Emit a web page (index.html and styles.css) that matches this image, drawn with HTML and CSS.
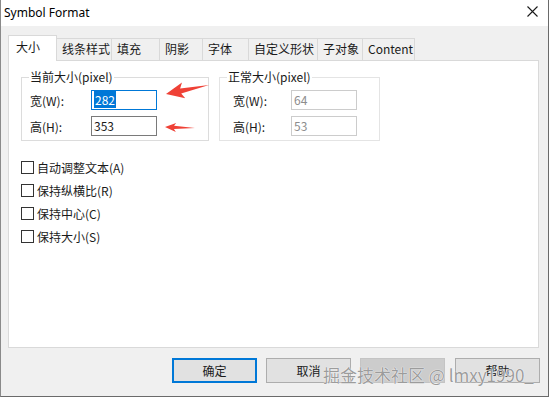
FILE: index.html
```html
<!DOCTYPE html>
<html lang="zh-CN">
<head>
    <meta charset="UTF-8">
    <title>Symbol Format</title>
    <link rel="stylesheet" href="styles.css">
</head>
<body>
    <div class="window">
        <div class="titlebar">
            <span class="title">Symbol Format</span>
            <svg class="close" width="11" height="11" viewBox="0 0 11 11">
                <path d="M0.5 0.5 L10.5 10.5 M10.5 0.5 L0.5 10.5" stroke="#1a1a1a" stroke-width="1.1" fill="none"/>
            </svg>
        </div>
        <div class="content">
            <div class="tabs">
                <div class="tab active" style="width:49px">大小</div>
                <div class="tab" style="width:55px">线条样式</div>
                <div class="tab" style="width:48px">填充</div>
                <div class="tab" style="width:43px">阴影</div>
                <div class="tab" style="width:46px">字体</div>
                <div class="tab" style="width:69px">自定义形状</div>
                <div class="tab" style="width:45px">子对象</div>
                <div class="tab" style="width:52px">Content</div>
            </div>
            <div class="panel">
                <div class="groups">
                    <fieldset class="group current">
                        <legend>当前大小(pixel)</legend>
                        <div class="field">
                            <label>宽(W):</label>
                            <span class="input focused"><span class="selected">282</span></span>
                        </div>
                        <div class="field">
                            <label>高(H):</label>
                            <span class="input">353</span>
                        </div>
                    </fieldset>
                    <fieldset class="group normal">
                        <legend>正常大小(pixel)</legend>
                        <div class="field">
                            <label>宽(W):</label>
                            <span class="input disabled">64</span>
                        </div>
                        <div class="field">
                            <label>高(H):</label>
                            <span class="input disabled">53</span>
                        </div>
                    </fieldset>
                </div>
                <div class="checks">
                    <div class="check"><span class="box"></span>自动调整文本(A)</div>
                    <div class="check"><span class="box"></span>保持纵横比(R)</div>
                    <div class="check"><span class="box"></span>保持中心(C)</div>
                    <div class="check"><span class="box"></span>保持大小(S)</div>
                </div>
            </div>
            <div class="buttons">
                <button class="btn default">确定</button>
                <button class="btn">取消</button>
                <button class="btn blank"></button>
                <button class="btn last">帮助</button>
            </div>
        </div>

        <!-- annotation arrows drawn over the dialog -->
        <svg class="arrows" width="549" height="397" viewBox="0 0 549 397">
            <g transform="translate(166 94) rotate(-11.8)" fill="#ef4136">
                <polygon points="0,0 18,-8 15,-2.6 44,0 15,2.6 18,8"/>
            </g>
            <g transform="translate(165 127) rotate(2)" fill="#ef4136">
                <polygon points="0,0 11,-4.5 9,-1.6 30,0 9,1.6 11,4.5"/>
            </g>
        </svg>
        <div class="watermark">掘金技术社区 @ lmxy1990_</div>
    </div>
</body>
</html>
```

FILE: styles.css
```css
body {
    margin: 0;
    padding: 0;
    font-family: 'Noto Sans CJK SC', 'Noto Sans', sans-serif;
    font-size: 12px;
    color: #1a1a1a;
    background-color: #ffffff;
}

.window {
    position: relative;
    box-sizing: border-box;
    width: 549px;
    height: 397px;
    border-left: 1px solid #8a8a8a;
    border-right: 1px solid #6a6a6a;
    border-bottom: 1px solid #6a6a6a;
    background-color: #f0f0f0;
    display: flex;
    flex-direction: column;
    overflow: hidden;
}

/* Title bar */
.titlebar {
    height: 26px;
    background-color: #ffffff;
    display: flex;
    align-items: center;
    justify-content: space-between;
    padding: 0 10px 0 3px;
    flex-shrink: 0;
}

.title {
    font-family: 'Noto Sans', sans-serif;
    font-size: 12px;
    color: #000;
    margin-top: -1px;
}

.close {
    margin-top: -3px;
}

.content {
    flex: 1;
    display: flex;
    flex-direction: column;
}

/* Tabs */
.tabs {
    display: flex;
    align-items: flex-end;
    height: 25px;
    margin-top: 9px;
    padding-left: 7px;
}

.tab {
    box-sizing: border-box;
    height: 22px;
    line-height: 20px;
    padding-left: 5px;
    border: 1px solid #d9d9d9;
    border-bottom: none;
    border-left: none;
    background-color: #f0f0f0;
    white-space: nowrap;
}

.tab.active {
    height: 26px;
    line-height: 21px;
    padding-left: 7px;
    background-color: #ffffff;
    border-left: 1px solid #d9d9d9;
    position: relative;
    z-index: 1;
    margin-bottom: -1px;
}

.panel {
    box-sizing: border-box;
    height: 288px;
    margin: 0 9px 0 7px;
    background-color: #ffffff;
    border: 1px solid #d9d9d9;
    padding: 8px 0 0 12px;
}

/* Group boxes */
.groups {
    display: flex;
    gap: 10px;
}

.group {
    box-sizing: border-box;
    margin: 0;
    padding: 0 0 4px 7px;
    border: 1px solid #dcdcdc;
    min-width: 0;
}

.group.current {
    width: 188px;
}

.group.normal {
    width: 161px;
    border-color: #e4e4e4;
}

.group legend {
    padding: 0 1px;
    line-height: 16px;
    color: #1a1a1a;
}

.field {
    display: flex;
    align-items: center;
    height: 20px;
    margin-top: 5px;
}

.field + .field {
    margin-top: 6px;
}

.field label {
    width: 61px;
    padding-left: 1px;
}

.normal .field label {
    width: 58px;
    padding-left: 6px;
}

.input {
    box-sizing: border-box;
    width: 66px;
    height: 20px;
    border: 1px solid #7a7a7a;
    padding: 0 2px;
    line-height: 18px;
    color: #1a1a1a;
    background-color: #fff;
}

.input.focused {
    border-color: #0078d7;
}

.input.disabled {
    border-color: #cccccc;
    color: #8d8d8d;
}

.selected {
    background-color: #0078d7;
    color: #ffffff;
    padding: 0 1px;
}

/* Checkboxes */
.checks {
    margin-top: 15px;
}

.check {
    display: flex;
    align-items: center;
    height: 23px;
}

.check .box {
    box-sizing: border-box;
    width: 13px;
    height: 13px;
    border: 1px solid #333;
    margin-right: 3px;
}

/* Buttons */
.buttons {
    display: flex;
    justify-content: flex-end;
    margin-top: 10px;
    padding-right: 8px;
    gap: 9px;
}

.btn {
    box-sizing: border-box;
    width: 85px;
    height: 25px;
    border: 1px solid #adadad;
    background-color: #e1e1e1;
    font-family: 'Noto Sans CJK SC', sans-serif;
    font-size: 12px;
    color: #1a1a1a;
    padding: 0;
}

.btn.default {
    border: 2px solid #0078d7;
}

.btn.blank {
    background-color: #cccccc;
    border-color: #c4c4c4;
}

.btn.last {
    margin-left: 1px;
}

/* Overlays */
.arrows {
    position: absolute;
    left: -1px;
    top: 0;
    pointer-events: none;
}

.watermark {
    position: absolute;
    left: 322px;
    top: 362px;
    font-family: 'Noto Sans CJK SC', sans-serif;
    font-size: 17px;
    color: #9c9c9c;
    white-space: nowrap;
    text-shadow: 0 0 1px #fff, 0 0 1px #fff;
    pointer-events: none;
}
```
